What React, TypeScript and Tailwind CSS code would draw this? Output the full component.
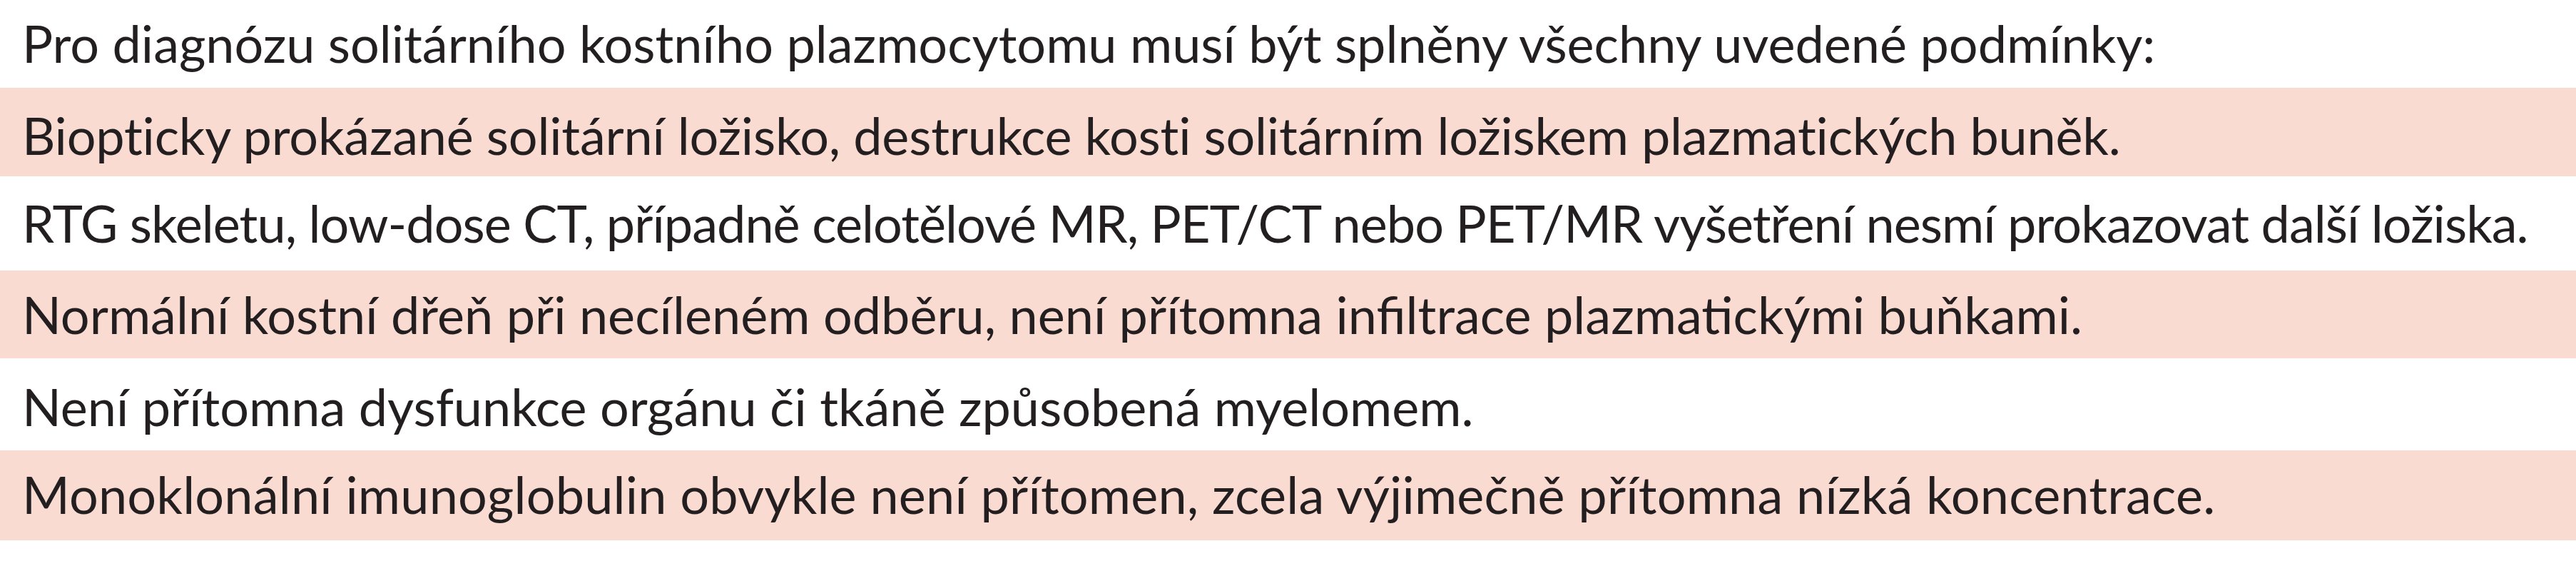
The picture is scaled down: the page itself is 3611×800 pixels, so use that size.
import React from "react";

type Row = { text: string; pink: boolean; h: string; pt: string; track: string };

const rows: Row[] = [
  {
    text: "Pro diagnózu solitárního kostního plazmocytomu musí být splněny všechny uvedené podmínky:",
    pink: false,
    h: "h-[123px]",
    pt: "pt-[24px]",
    track: "tracking-normal",
  },
  {
    text: "Biopticky prokázané solitární ložisko, destrukce kosti solitárním ložiskem plazmatických buněk.",
    pink: true,
    h: "h-[124px]",
    pt: "pt-[30px]",
    track: "tracking-[-0.2px]",
  },
  {
    text: "RTG skeletu, low-dose CT, případně celotělové MR, PET/CT nebo PET/MR vyšetření nesmí prokazovat další ložiska.",
    pink: false,
    h: "h-[132px]",
    pt: "pt-[29px]",
    track: "tracking-[-0.95px]",
  },
  {
    text: "Normální kostní dřeň při necíleném odběru, není přítomna infiltrace plazmatickými buňkami.",
    pink: true,
    h: "h-[123px]",
    pt: "pt-[25px]",
    track: "tracking-normal",
  },
  {
    text: "Není přítomna dysfunkce orgánu či tkáně způsobená myelomem.",
    pink: false,
    h: "h-[129px]",
    pt: "pt-[31px]",
    track: "tracking-normal",
  },
  {
    text: "Monoklonální imunoglobulin obvykle není přítomen, zcela výjimečně přítomna nízká koncentrace.",
    pink: true,
    h: "h-[126px]",
    pt: "pt-[25px]",
    track: "tracking-[0.2px]",
  },
];

export default function App() {
  return (
    <div className="w-[3611px] h-[800px] bg-white font-['Lato',_'Open_Sans',_sans-serif] text-[#231f20]">
      {rows.map((r, i) => (
        <div
          key={i}
          className={`${r.h} ${r.pt} pl-[31px] ${r.pink ? "bg-[#fadbd2]" : "bg-white"}`}
        >
          <p className={`text-[72px] leading-[72px] whitespace-nowrap ${r.track}`}>{r.text}</p>
        </div>
      ))}
    </div>
  );
}
